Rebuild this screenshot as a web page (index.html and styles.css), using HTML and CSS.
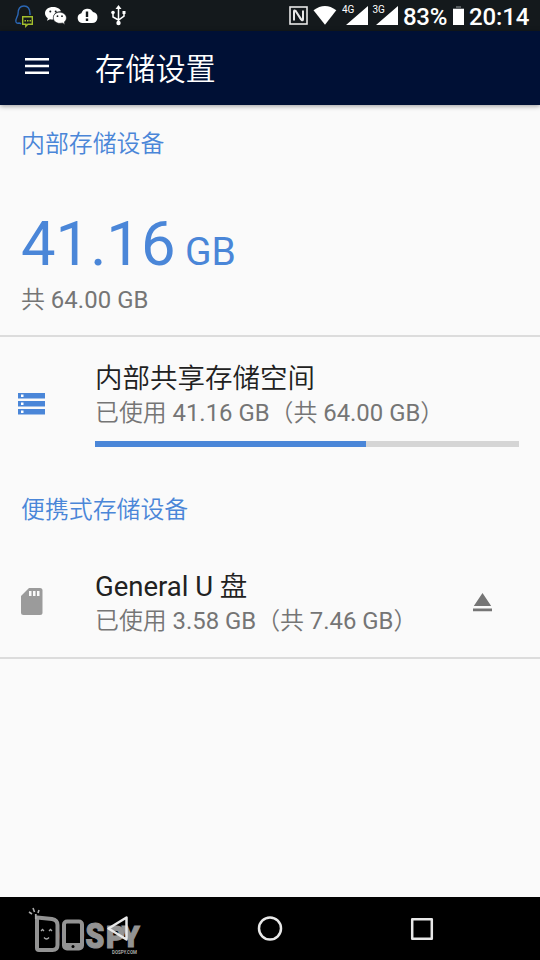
FILE: index.html
```
<!DOCTYPE html>
<html lang="zh-CN">
<head>
<meta charset="utf-8">
<title>存储设置</title>
<link rel="stylesheet" href="styles.css">
</head>
<body>
<div class="screen">
  <header class="status">
    <svg class="status-left" width="140" height="31" viewBox="0 0 140 31">
      <path d="M21 24c-1-1-2-1-2-1s-2 1-3-1c-1-3 2-6 2-8 0-5 2-8 6-8s6 3 6 8v1" fill="none" stroke="#2b67b5" stroke-width="1.4"/>
      <path d="M22.700 16.700h9.600v7.600h-4.500l-2 2v-2h-3.100z" fill="#14191c" stroke="#a3bf2d" stroke-width="1.400"/>
      <path d="M24.500 20h1.500v1.500h-1.500zM27 20h1.500v1.500h-1.500zM29.500 20h1.500v1.500h-1.500z" fill="#a3bf2d"/>
      <path d="M53 7c-4.700 0-8 2.700-8 6.300 0 2 1.200 3.700 2.800 4.900l-.8 2.600 3-1.600c1.200.3 2 .4 3.300.3-1-5 3-8.500 7.600-8.200C60.200 8.700 57 7 53 7z" fill="#fff"/>
      <path d="M59.500 12.300c-3.700 0-6.200 2.500-6.200 5.500 0 3.200 3 5.500 6.500 5.500.9 0 1.700-.1 2.500-.4l2.600 1.500-.7-2.300c1.300-1 2.200-2.500 2.200-4.200 0-3-3-5.600-6.900-5.600z" fill="#fff" stroke="#14191c" stroke-width=".5"/>
      <g fill="#14191c"><circle cx="50.300" cy="11.500" r="1"/><circle cx="55.700" cy="11.500" r="1"/><circle cx="57.500" cy="16.200" r=".9"/><circle cx="62" cy="16.200" r=".9"/></g>
      <path d="M82 23a5 5 0 0 1-.6-9.800 6.300 6.300 0 0 1 11.600-1.100A5.500 5.500 0 0 1 92 23z" fill="#fff"/>
      <path d="M85.800 11.500h2.400v5.500h-2.400zM85.800 18.500h2.400v2.400h-2.400z" fill="#14191c"/>
      <path d="M118.500 8v14M113 13v4l5.500 3 5.500-4v-4" fill="none" stroke="#fff" stroke-width="1.500"/>
      <path d="M118.500 5l3 4h-6zM122.500 11h3v3h-3z" fill="#fff"/><circle cx="113" cy="12.500" r="1.800" fill="#fff"/><circle cx="118.500" cy="23" r="2.200" fill="#fff"/>
    </svg>
    <svg class="status-signal" width="112" height="31" viewBox="288 0 112 31">
      <rect x="290" y="7" width="17" height="17" fill="none" stroke="#e8e8e8" stroke-width="1.600"/>
      <path d="M294 20.500v-9q0-1.800 1.500-.7l5.500 8.700M303 10.500v8.700q0 1.800-1.500.7L296 11.500" fill="none" stroke="#e8e8e8" stroke-width="2"/>
      <path d="M313.500 10.300Q325 1.700 336.300 10.300L325 24.700z" fill="#fff"/>
      <path d="M368 6v19h-22zM398 6v19h-22z" fill="#fff"/>
      <g class="network"><text x="342" y="13">4G</text><text x="372.500" y="13">3G</text></g>
    </svg>
    <span class="percent">83%</span>
    <svg class="battery" width="13" height="31" viewBox="452 0 13 31"><path d="M456 6h5v2h3v2h-11V8h3z" fill="#555a5d"/><path d="M453 9h11v16h-11z" fill="#fff"/></svg>
    <span class="clock">20:14</span>
  </header>
  <div class="toolbar">
    <svg width="24" height="18" viewBox="0 0 24 18"><path d="M0 0h24v2.500H0zM0 6.700h24v2.500H0zM0 13.400h24v2.500H0z" fill="#fff"/></svg>
    <h1>存储设置</h1>
  </div>
  <main>
    <section class="summary">
      <h2>内部存储设备</h2>
      <div class="total"><span class="number">41.16</span><span class="unit">GB</span></div>
      <p class="sub">共 <span class="size">64.00 GB</span></p>
    </section>
    <section class="internal row">
      <div class="icon"><svg width="27" height="22" viewBox="0 0 27 22"><path d="M0 0h27v5.500H0zM0 8h27v5.500H0zM0 16h27v5.500H0z" fill="#4a86d8"/><path d="M3 1.500h2.500V4H3zM3 9.500h2.500V12H3zM3 17.500h2.500V20H3z" fill="#fff"/></svg></div>
      <div class="details">
        <h3>内部共享存储空间</h3>
        <p class="sub">已使用 <span class="size">41.16 GB</span>（共 <span class="size">64.00 GB</span>）</p>
        <div class="progress"><div class="used"></div></div>
      </div>
    </section>
    <h2 class="portable-heading">便携式存储设备</h2>
    <section class="portable row">
      <div class="icon sd"><svg width="22" height="27" viewBox="0 0 22 27"><path d="M8 0h11q2.500 0 2.500 2.500v22q0 2.500-2.500 2.500H2.500Q0 27 0 24.500V8z" fill="#9b9b9b"/><path d="M8 3h2.500v5H8zM12 3h2.500v5H12zM16 3h2.500v5H16z" fill="#fafafa"/></svg></div>
      <div class="details">
        <h3><span class="size">General U</span> 盘</h3>
        <p class="sub">已使用 <span class="size">3.58 GB</span>（共 <span class="size">7.46 GB</span>）</p>
      </div>
      <svg class="eject" width="19" height="19" viewBox="0 0 19 19"><path d="M9.500 0l8.700 13H.8zM0 15.500h19v2.700H0z" fill="#757575"/></svg>
    </section>
  </main>
  <footer class="navbar">
    <svg width="540" height="63" viewBox="0 897 540 63">
      <g class="logo">
        <text transform="translate(34 949.500) scale(1.050 1)" font-size="39">D</text>
        <text transform="translate(61 949) scale(.920 1)" font-size="38">O</text>
        <text class="heavy" transform="translate(85.500 948) scale(.860 1)" font-size="35">S</text>
        <text class="heavy" transform="translate(106 947.500) scale(.920 1)" font-size="32">P</text>
        <text class="heavy" transform="translate(122 946.500) scale(.940 1)" font-size="30">Y</text>
        <text class="domain" x="112" y="953.500" textLength="25" lengthAdjust="spacingAndGlyphs">DOSPY.COM</text>
      </g>
      <path d="M37 917.500l15 1.500q5.500 1 5.500 6v20q0 5-5 5H39q-2 0-2-2z" fill="#000" stroke="#939393" stroke-width="4" stroke-linejoin="round"/>
      <rect x="64" y="921.500" width="18" height="27" rx="3" fill="#000" stroke="#939393" stroke-width="4"/>
      <path d="M64 943h18v6H64z" fill="#939393"/><circle cx="73" cy="946.500" r="1.500" fill="#000"/>
      <g fill="none" stroke="#aaa" stroke-width="1.300"><path d="M41 931l1.500-1.500 1.500 1.500M49 931l1.500-1.500 1.500 1.500M44 937.500q2.500 3 5 0"/><path d="M29 912l3 2M33 908l1.500 4M39 910l-1 3" stroke-width="1.600"/><path d="M35.800 914v5" stroke-width="1.800"/></g>
      <path d="M126.500 917.500v22l-18-11z" fill="none" stroke="#e8e8e8" stroke-width="2.500" stroke-linejoin="round"/>
      <circle cx="270" cy="928.500" r="11" fill="none" stroke="#e8e8e8" stroke-width="2.500"/>
      <rect x="412.200" y="919.200" width="19.600" height="19.600" fill="none" stroke="#e8e8e8" stroke-width="2.500" stroke-linejoin="round"/>
    </svg>
  </footer>
</div>
</body>
</html>
```
FILE: styles.css
```
* { box-sizing: border-box; margin: 0; padding: 0; }
body { background: #fafafa; font-family: Roboto, "Noto Sans CJK SC", sans-serif; color: #212121; }
svg { display: block; flex: none; }
.screen { width: 540px; height: 960px; display: flex; flex-direction: column; overflow: hidden; }
.status { height: 31px; flex: none; display: flex; align-items: center; background: #14191c; color: #fff; line-height: 31px; }
.status-signal { margin-left: 148px; }
.network { fill: #fff; font-size: 10px; }
.percent { font-size: 24px; font-weight: 500; width: 45px; margin: 4px 4px 0 3px; white-space: nowrap; letter-spacing: -.3px; }
.clock { font-size: 24px; font-weight: 500; margin: 4px 0 0 4px; white-space: nowrap; letter-spacing: -.1px; }
.toolbar { height: 74px; flex: none; display: flex; align-items: center; gap: 46px; padding: 0 25px 3px; background: #001035; color: #fff; box-shadow: 0 1px 5px rgba(0, 0, 0, .4); z-index: 1; }
h1 { font-size: 30.200px; font-weight: 350; line-height: 40px; padding-top: 7px; }
main { flex: 1; }
h2 { font-size: 23.900px; font-weight: 350; line-height: 36px; color: #4a86d8; }
.summary { height: 232px; padding: 21px 21px 0; border-bottom: 2px solid #dcdcdc; }
.total { display: flex; align-items: baseline; height: 80px; margin-top: 42px; color: #4a86d8; line-height: 80px; }
.number { font-size: 61.500px; width: 164px; }
.unit { font-size: 39px; }
.sub { font-size: 23.900px; font-weight: 350; line-height: 34px; color: #757575; white-space: nowrap; }
.size { font-weight: 400; }
.summary .sub { margin-top: -1px; }
.summary .size { letter-spacing: .1px; }
.row { display: flex; }
.icon { width: 95px; flex: none; padding: 56px 0 0 18px; }
.internal { height: 155px; }
.internal .details { padding-top: 25px; width: 424px; }
h3 { font-size: 27.500px; font-weight: 350; line-height: 34px; white-space: nowrap; }
.progress { height: 6px; margin-top: 11px; background: #d5d5d5; }
.used { width: 64%; height: 100%; background: #4a86d8; }
.portable-heading { padding-left: 21px; }
.portable { height: 131px; border-bottom: 2px solid #dcdcdc; }
.portable .details { padding-top: 42px; width: 378px; }
.icon.sd { padding: 60px 0 0 21px; }
.eject { margin-top: 65px; }
.navbar { height: 63px; flex: none; background: #000; }
.logo { fill: #939393; font-family: Roboto, sans-serif; font-weight: 900; }
.heavy { stroke: #939393; stroke-width: 1.200px; }
.domain { font-size: 5px; font-weight: 700; fill: #aaa; }
```
